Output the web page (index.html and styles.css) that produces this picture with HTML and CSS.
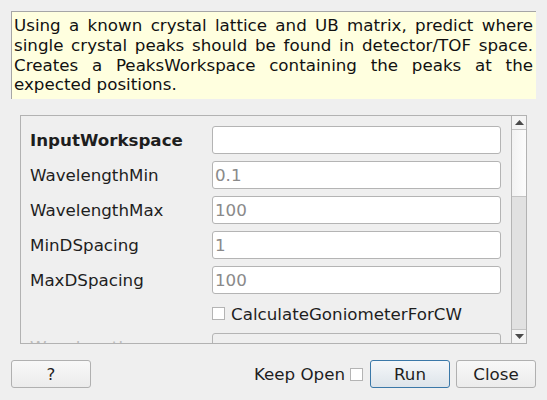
FILE: index.html
```html
<!DOCTYPE html>
<html>
<head>
<meta charset="utf-8">
<link rel="stylesheet" href="styles.css">
</head>
<body>
<div class="dialog">
  <div class="desc">Using a known crystal lattice and UB matrix, predict where single crystal peaks should be found in detector/TOF space. Creates a PeaksWorkspace containing the peaks at the expected positions.</div>
  <div class="scroll">
    <div class="content">
      <div class="row"><span class="label bold">InputWorkspace</span><span class="field"></span></div>
      <div class="row"><span class="label">WavelengthMin</span><span class="field">0.1</span></div>
      <div class="row"><span class="label">WavelengthMax</span><span class="field">100</span></div>
      <div class="row"><span class="label">MinDSpacing</span><span class="field">1</span></div>
      <div class="row"><span class="label">MaxDSpacing</span><span class="field">100</span></div>
      <div class="row check-row"><span class="label"></span><span class="check"><span class="box"></span>CalculateGoniometerForCW</span></div>
      <div class="row"><span class="label disabled">Wavelength</span><span class="field disabled-field"></span></div>
    </div>
    <div class="scrollbar">
      <div class="arrow up"><svg width="9" height="5" viewBox="0 0 9 5"><polygon points="0,5 9,5 4.5,0" fill="#4a4a4a"/></svg></div>
      <div class="handle"></div>
      <div class="track"></div>
      <div class="arrow down"><svg width="9" height="5" viewBox="0 0 9 5"><polygon points="0,0 9,0 4.5,5" fill="#4a4a4a"/></svg></div>
    </div>
  </div>
  <div class="buttons">
    <button class="btn help">?</button>
    <span class="spacer"></span>
    <span class="keep">Keep Open <span class="box"></span></span>
    <button class="btn run">Run</button>
    <button class="btn close">Close</button>
  </div>
</div>
</body>
</html>
```

FILE: styles.css
```css
html, body {
  margin: 0;
  padding: 0;
  background: #efefef;
}
body {
  width: 547px;
  height: 400px;
  overflow: hidden;
  font-family: "DejaVu Sans", sans-serif;
  font-size: 16.7px;
  color: #1e1e1e;
}
.dialog {
  display: flex;
  flex-direction: column;
  padding: 11px 11px 0 11px;
}
.desc {
  box-sizing: border-box;
  width: 525px;
  height: 88px;
  background: #ffffdf;
  border-top: 1px solid #a6a6a6;
  border-left: 1px solid #a6a6a6;
  padding: 4px 3px 0 2px;
  line-height: 19.8px;
  text-align: justify;
  color: #111;
}
.scroll {
  box-sizing: border-box;
  margin: 16px 0 0 9px;
  width: 507px;
  height: 229px;
  border: 1px solid #b2b2b2;
  display: flex;
  overflow: hidden;
}
.content {
  flex: 1;
  padding: 10px 10px 0 9px;
  display: flex;
  flex-direction: column;
  gap: 7px;
  overflow: hidden;
}
.row {
  display: flex;
  align-items: center;
  height: 28px;
  flex: none;
}
.check-row {
  height: 25px;
}
.label {
  width: 182px;
  flex: none;
}
.bold {
  font-weight: bold;
}
.disabled {
  color: #bcbcbc;
}
.field {
  box-sizing: border-box;
  width: 290px;
  height: 28px;
  background: #fff;
  border: 1px solid #b4b4b4;
  border-radius: 3px;
  padding-left: 2px;
  line-height: 26px;
  color: #8a8a8a;
}
.disabled-field {
  background: #efefef;
}
.check {
  display: flex;
  align-items: center;
}
.box {
  display: inline-block;
  box-sizing: border-box;
  width: 13px;
  height: 13px;
  background: #fff;
  border: 1px solid #b4b4b4;
  margin-right: 6px;
}
.scrollbar {
  width: 14px;
  flex: none;
  display: flex;
  flex-direction: column;
  border-left: 1px solid #b4b4b4;
}
.arrow {
  height: 13px;
  display: flex;
  align-items: center;
  justify-content: center;
  background: #f4f4f4;
  flex: none;
}
.arrow.up {
  border-bottom: 1px solid #c4c4c4;
}
.arrow.down {
  border-top: 1px solid #c4c4c4;
}
.handle {
  height: 66px;
  flex: none;
  background: linear-gradient(to right, #f2f2f2, #fcfcfc);
  border-bottom: 1px solid #c4c4c4;
}
.track {
  flex: 1;
  background: #e1e1e1;
}
.buttons {
  display: flex;
  align-items: center;
  margin-top: 16px;
  height: 28px;
}
.spacer {
  flex: 1;
}
.btn {
  box-sizing: border-box;
  height: 28px;
  width: 80px;
  font-family: "DejaVu Sans", sans-serif;
  font-size: 16.7px;
  color: #1e1e1e;
  border: 1px solid #b0b0b0;
  border-radius: 3px;
  background: linear-gradient(to bottom, #f8f8f8, #ebebeb);
  padding: 0;
}
.keep {
  display: flex;
  align-items: center;
  margin-right: 1px;
}
.keep .box {
  margin-left: 5px;
  margin-right: 6px;
}
.run {
  border-color: #3a78a8;
  background: linear-gradient(to bottom, #f5f7f9, #dde4ea);
  margin-right: 6px;
}
```
